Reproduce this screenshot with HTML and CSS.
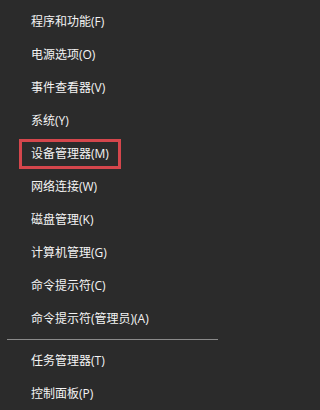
FILE: index.html
```html
<!DOCTYPE html>
<html lang="zh-CN">
<head>
<meta charset="utf-8">
<link rel="stylesheet" href="styles.css">
</head>
<body>
<ul class="menu">
  <li class="item"><span class="label">程序和功能(F)</span></li>
  <li class="item"><span class="label">电源选项(O)</span></li>
  <li class="item"><span class="label">事件查看器(V)</span></li>
  <li class="item"><span class="label">系统(Y)</span></li>
  <li class="item"><span class="label marked">设备管理器(M)</span></li>
  <li class="item"><span class="label">网络连接(W)</span></li>
  <li class="item"><span class="label">磁盘管理(K)</span></li>
  <li class="item"><span class="label">计算机管理(G)</span></li>
  <li class="item"><span class="label">命令提示符(C)</span></li>
  <li class="item"><span class="label">命令提示符(管理员)(A)</span></li>
  <li class="separator"></li>
  <li class="item"><span class="label">任务管理器(T)</span></li>
  <li class="item"><span class="label">控制面板(P)</span></li>
</ul>
</body>
</html>
```
FILE: styles.css
```css
html, body {
  margin: 0;
  padding: 0;
  background: #2b2b2b;
  width: 225px;
  height: 410px;
  overflow: hidden;
}
.menu {
  list-style: none;
  margin: 0;
  padding: 5px 0 0 0;
  font-family: "Open Sans", "Noto Sans CJK SC", sans-serif;
  font-size: 12px;
  color: #f4f4f4;
}
.item {
  height: 33px;
  display: flex;
  align-items: center;
  padding-left: 31px;
}
.label {
  line-height: 16px;
  white-space: nowrap;
}
.marked {
  border: 3px solid #d4464c;
  margin-left: -12px;
  padding: 4px 9px 4px 9px;
}
.separator {
  height: 1px;
  background: #8a8a8a;
  margin: 4px 7px 4px 7px;
}
```
